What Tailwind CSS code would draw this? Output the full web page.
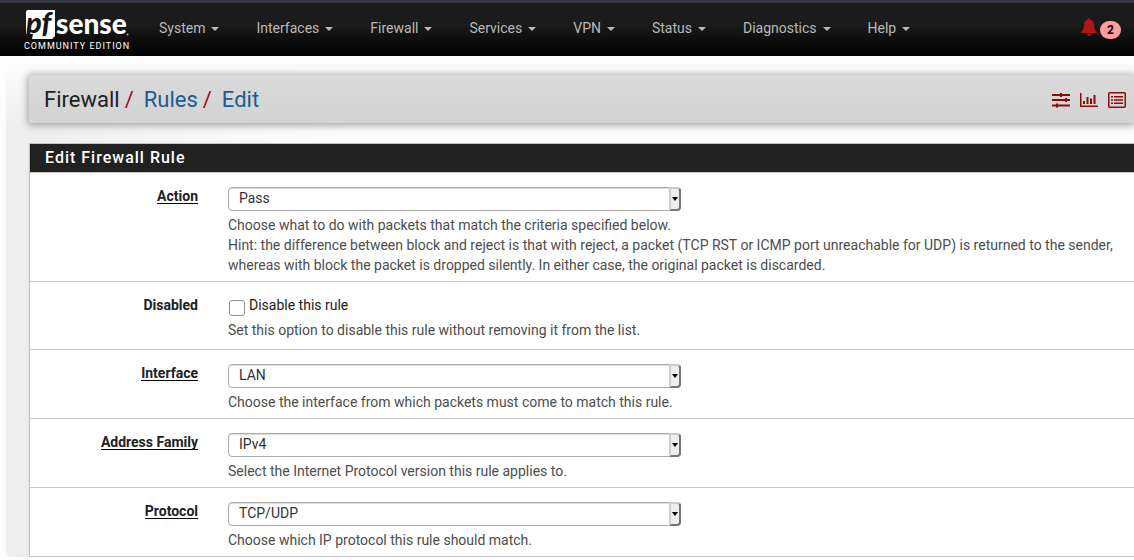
<!DOCTYPE html>
<html lang="en">
<head>
<meta charset="utf-8">
<title>pfSense - Firewall: Rules: Edit</title>
<script src="https://cdn.jsdelivr.net/npm/@tailwindcss/browser@4"></script>
</head>
<body class="bg-[#fdfdfd] font-[Roboto,sans-serif] text-sm leading-5 text-[#212121] overflow-x-hidden">
<header class="flex h-14 items-start border-t-3 border-[#373944] bg-linear-to-b from-[#1b1b1b] from-40% to-[#030303] pl-6 pr-[13px]">
  <a href="#" class="w-[107px] text-white" aria-label="pfSense Community Edition">
    <svg class="block h-[46px] w-[107px] overflow-visible" viewBox="0 -8 107 46" font-family="Lato, sans-serif">
      <path d="M4 -1H31V25L28 28H8L9 23H2V1Q2 -1 4 -1Z" fill="#fff"/>
      <text x="2" y="22" font-size="29" font-weight="900" font-style="italic" fill="#151515">pf</text>
      <text x="32" y="23" font-size="28" font-weight="900" fill="#fff">sense</text>
      <circle cx="103.500" cy="23.500" r="1" fill="#aaa"/>
    </svg>
    <span class="-mt-[9px] block whitespace-nowrap text-[9px] leading-3 tracking-[1px]">COMMUNITY EDITION</span>
  </a>
  <nav class="ml-7 flex gap-[37px] pt-[15px] text-[#b9b9b9]">
    <a href="#" class="flex items-center gap-1.5 whitespace-nowrap">System <i class="mt-0.5 border-x-4 border-t-4 border-x-transparent"></i></a>
    <a href="#" class="flex items-center gap-1.5 whitespace-nowrap">Interfaces <i class="mt-0.5 border-x-4 border-t-4 border-x-transparent"></i></a>
    <a href="#" class="flex items-center gap-1.5 whitespace-nowrap">Firewall <i class="mt-0.5 border-x-4 border-t-4 border-x-transparent"></i></a>
    <a href="#" class="flex items-center gap-1.5 whitespace-nowrap">Services <i class="mt-0.5 border-x-4 border-t-4 border-x-transparent"></i></a>
    <a href="#" class="flex items-center gap-1.5 whitespace-nowrap">VPN <i class="mt-0.5 border-x-4 border-t-4 border-x-transparent"></i></a>
    <a href="#" class="flex items-center gap-1.5 whitespace-nowrap">Status <i class="mt-0.5 border-x-4 border-t-4 border-x-transparent"></i></a>
    <a href="#" class="flex items-center gap-1.5 whitespace-nowrap">Diagnostics <i class="mt-0.5 border-x-4 border-t-4 border-x-transparent"></i></a>
    <a href="#" class="flex items-center gap-1.5 whitespace-nowrap">Help <i class="mt-0.5 border-x-4 border-t-4 border-x-transparent"></i></a>
  </nav>
  <a href="#" class="ml-auto flex gap-[3px] pt-[15px]" aria-label="2 notices">
    <svg class="h-[18px] w-4" viewBox="0 0 16 18" fill="#b01717"><path d="M8 0Q9 0 9 1.500Q13 2.500 13 7Q13 12 16 14V15H0V14Q3 12 3 7Q3 2.500 7 1.500Q7 0 8 0ZM6 16H10Q10 18 8 18Q6 18 6 16Z"/></svg>
    <span class="mt-[3px] h-[18px] w-[21px] rounded-full bg-[#ff9c9c] text-center text-xs leading-[18px] font-bold text-black">2</span>
  </a>
</header>
<main class="mt-2.5 ml-1.5 rounded-l-md bg-[linear-gradient(to_bottom,#fdfdfd,transparent_60px),linear-gradient(to_right,#eee,#fdfdfd_30%)] pl-[23px] shadow-[0_0_3px_#f4f4f4]">
  <div class="pt-[9px]">
    <div class="flex h-12 items-center justify-between bg-linear-to-b from-[#dadada] to-[#d3d3d3] pt-0.5 pl-[15px] pr-2 shadow-[0_1px_8px_1px_#999]">
      <nav class="flex text-[22px] leading-7" aria-label="Breadcrumb">
        <span>Firewall</span><span class="ml-[5px] mr-2.5 text-[#a00c18]">/</span><a href="#" class="text-[#205b91]">Rules</a><span class="ml-[5px] mr-2.5 text-[#a00c18]">/</span><a href="#" class="text-[#205b91]">Edit</a>
      </nav>
      <div class="flex gap-2.5">
        <a href="#" aria-label="Settings"><svg class="h-4 w-[18px]" viewBox="0 0 18 16" fill="#8b0c0c"><path d="M0 2H18V4H0ZM0 7H18V9H0ZM0 12.500H18V14.500H0ZM8 1H10V5H8ZM13 6H15V10H13ZM4 11.500H6V15.500H4Z"/></svg></a>
        <a href="#" aria-label="Status graphs"><svg class="h-4 w-[18px]" viewBox="0 0 18 16" fill="#8b0c0c"><path d="M0 1H1.500V13.500H18V15H0ZM3 9H5V12H3ZM6.500 5H8.500V12H6.500ZM10 6.500H12V12H10ZM13.500 3H15.500V12H13.500Z"/></svg></a>
        <a href="#" aria-label="Logs"><svg class="h-4 w-[18px]" viewBox="0 0 18 16" fill="none" stroke="#8b0c0c" stroke-width="1.500"><rect x="0.750" y="0.750" width="16.500" height="14.500" rx="1"/><path d="M3 4.750H5M6 4.750H15M3 8H5M6 8H15M3 11.250H5M6 11.250H15"/></svg></a>
      </div>
    </div>
  </div>
  <form class="mt-5 border border-r-0 border-[#c4c4c4] bg-white shadow-[0_1px_2px_#ccc]">
    <h2 class="h-7 bg-[#212121] pl-[15px] text-base leading-7 font-medium tracking-[1px] text-white">Edit Firewall Rule</h2>
    <div class="flex gap-[30px] border-y border-[#c8c8c8] pt-[13px] pb-1.5">
      <div class="w-[168px] shrink-0 text-right"><label for="action" class="inline-block h-[18px] border-b border-black leading-5 font-bold">Action</label></div>
      <div class="flex-1 pt-px">
        <div class="relative w-1/2"><select id="action" class="block h-6 w-full appearance-none rounded border border-[#aaa] bg-white pb-0.5 pl-2.5 text-[#333] shadow-[inset_0_1px_1px_#ddd]"><option>Pass</option></select><span class="pointer-events-none absolute inset-y-0 right-0 flex w-3 items-center justify-center rounded-r border-2 border-t-[#ccc] border-r-[#777] border-b-[#777] border-l-[#ccc] bg-[#eee]"><i class="border-x-3 border-t-4 border-x-transparent border-t-black"></i></span></div>
        <p class="mt-1 pr-[15px] text-[#4d4d4d]">Choose what to do with packets that match the criteria specified below.<br>Hint: the difference between block and reject is that with reject, a packet (TCP RST or ICMP port unreachable for UDP) is returned to the sender, whereas with block the packet is dropped silently. In either case, the original packet is discarded.</p>
      </div>
    </div>
    <div class="flex gap-[30px] border-b border-[#c8c8c8] pt-[13px] pb-[9px]">
      <div class="w-[168px] shrink-0 text-right font-bold">Disabled</div>
      <div class="flex-1">
        <label class="flex h-5 gap-1"><input type="checkbox" class="mt-[5px] ml-px size-4 shrink-0 appearance-none rounded-[3px] border border-[#8f8f8f] bg-white">Disable this rule</label>
        <p class="mt-[5px] pr-[15px] text-[#4d4d4d]">Set this option to disable this rule without removing it from the list.</p>
      </div>
    </div>
    <div class="flex gap-[30px] border-b border-[#c8c8c8] pt-[13px] pb-1.5">
      <div class="w-[168px] shrink-0 text-right"><label for="interface" class="inline-block h-[18px] border-b border-black leading-5 font-bold">Interface</label></div>
      <div class="flex-1 pt-px">
        <div class="relative w-1/2"><select id="interface" class="block h-6 w-full appearance-none rounded border border-[#aaa] bg-white pb-0.5 pl-2.5 text-[#333] shadow-[inset_0_1px_1px_#ddd]"><option>LAN</option></select><span class="pointer-events-none absolute inset-y-0 right-0 flex w-3 items-center justify-center rounded-r border-2 border-t-[#ccc] border-r-[#777] border-b-[#777] border-l-[#ccc] bg-[#eee]"><i class="border-x-3 border-t-4 border-x-transparent border-t-black"></i></span></div>
        <p class="mt-1 pr-[15px] text-[#4d4d4d]">Choose the interface from which packets must come to match this rule.</p>
      </div>
    </div>
    <div class="flex gap-[30px] border-b border-[#c8c8c8] pt-[13px] pb-1.5">
      <div class="w-[168px] shrink-0 text-right"><label for="family" class="inline-block h-[18px] border-b border-black leading-5 font-bold">Address Family</label></div>
      <div class="flex-1 pt-px">
        <div class="relative w-1/2"><select id="family" class="block h-6 w-full appearance-none rounded border border-[#aaa] bg-white pb-0.5 pl-2.5 text-[#333] shadow-[inset_0_1px_1px_#ddd]"><option>IPv4</option></select><span class="pointer-events-none absolute inset-y-0 right-0 flex w-3 items-center justify-center rounded-r border-2 border-t-[#ccc] border-r-[#777] border-b-[#777] border-l-[#ccc] bg-[#eee]"><i class="border-x-3 border-t-4 border-x-transparent border-t-black"></i></span></div>
        <p class="mt-1 pr-[15px] text-[#4d4d4d]">Select the Internet Protocol version this rule applies to.</p>
      </div>
    </div>
    <div class="flex gap-[30px] pt-[13px] pb-1.5">
      <div class="w-[168px] shrink-0 text-right"><label for="protocol" class="inline-block h-[18px] border-b border-black leading-5 font-bold">Protocol</label></div>
      <div class="flex-1 pt-px">
        <div class="relative w-1/2"><select id="protocol" class="block h-6 w-full appearance-none rounded border border-[#aaa] bg-white pb-0.5 pl-2.5 text-[#333] shadow-[inset_0_1px_1px_#ddd]"><option>TCP/UDP</option></select><span class="pointer-events-none absolute inset-y-0 right-0 flex w-3 items-center justify-center rounded-r border-2 border-t-[#ccc] border-r-[#777] border-b-[#777] border-l-[#ccc] bg-[#eee]"><i class="border-x-3 border-t-4 border-x-transparent border-t-black"></i></span></div>
        <p class="mt-1 pr-[15px] text-[#4d4d4d]">Choose which IP protocol this rule should match.</p>
      </div>
    </div>
  </form>
</main>
</body>
</html>
